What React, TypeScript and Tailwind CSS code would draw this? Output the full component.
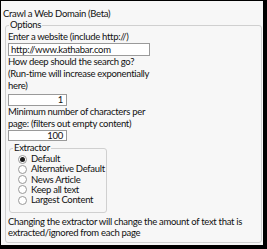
import React from 'react';

const font = { fontFamily: 'Lato, "Segoe UI", "Noto Sans", sans-serif' };

const Radio: React.FC<{ label: string; checked?: boolean }> = ({ label, checked }) => (
  <div className="flex items-center h-[10.25px] leading-[10.25px] gap-[4px] whitespace-nowrap">
    <span className="w-[9px] h-[9px] shrink-0 rounded-full border border-[#999] bg-white flex items-center justify-center">
      {checked && <span className="w-[5px] h-[5px] rounded-full bg-[#1a1a1a]" />}
    </span>
    <span>{label}</span>
  </div>
);

const App: React.FC = () => {
  return (
    <div className="w-[267px] h-[249px] bg-black pt-px pl-px pr-[4px] pb-[4px]">
      <div
        className="w-full h-full bg-[#f7f7f7] text-[9.5px] tracking-[-0.3px] leading-[12px] text-[#111] flex flex-col whitespace-nowrap"
        style={font}
      >
        <div className="pl-[2px] pt-[7px] h-[24px]">Crawl a Web Domain (Beta)</div>
        <div className="relative ml-[4px] mr-[1px] mb-[2px] flex-1 border border-[#d0d0d0] rounded-[3px] px-[2px] pt-[5px]">
          <span className="absolute -top-[7px] left-[3px] bg-[#f7f7f7] px-[1px]">Options</span>
          <div>Enter a website (include http://)</div>
          <div className="w-[142px] h-[13px] border border-[#9a9a9a] bg-white px-[2px] leading-[11px]">
            http://www.kathabar.com
          </div>
          <div>How deep should the search go?</div>
          <div>(Run-time will increase exponentially</div>
          <div>here)</div>
          <div className="w-[59px] h-[12px] border border-[#9a9a9a] bg-white px-[3px] leading-[10px] text-right mt-[2px]">
            1
          </div>
          <div>Minimum number of characters per</div>
          <div>page: (filters out empty content)</div>
          <div className="w-[59px] h-[11px] border border-[#9a9a9a] bg-white px-[3px] leading-[9px] text-right">
            100
          </div>
          <div className="relative mt-[7px] ml-[1px] w-[98px] h-[65px] border border-[#d0d0d0] rounded-[3px] pl-[8px] pt-[5px]">
            <span className="absolute -top-[7px] left-[3px] bg-[#f7f7f7] px-[1px]">Extractor</span>
            <Radio label="Default" checked />
            <Radio label="Alternative Default" />
            <Radio label="News Article" />
            <Radio label="Keep all text" />
            <Radio label="Largest Content" />
          </div>
          <div className="mt-[3px] leading-[11px] whitespace-normal">
            Changing the extractor will change the amount of text that is extracted/ignored from each page
          </div>
        </div>
      </div>
    </div>
  );
};

export default App;
